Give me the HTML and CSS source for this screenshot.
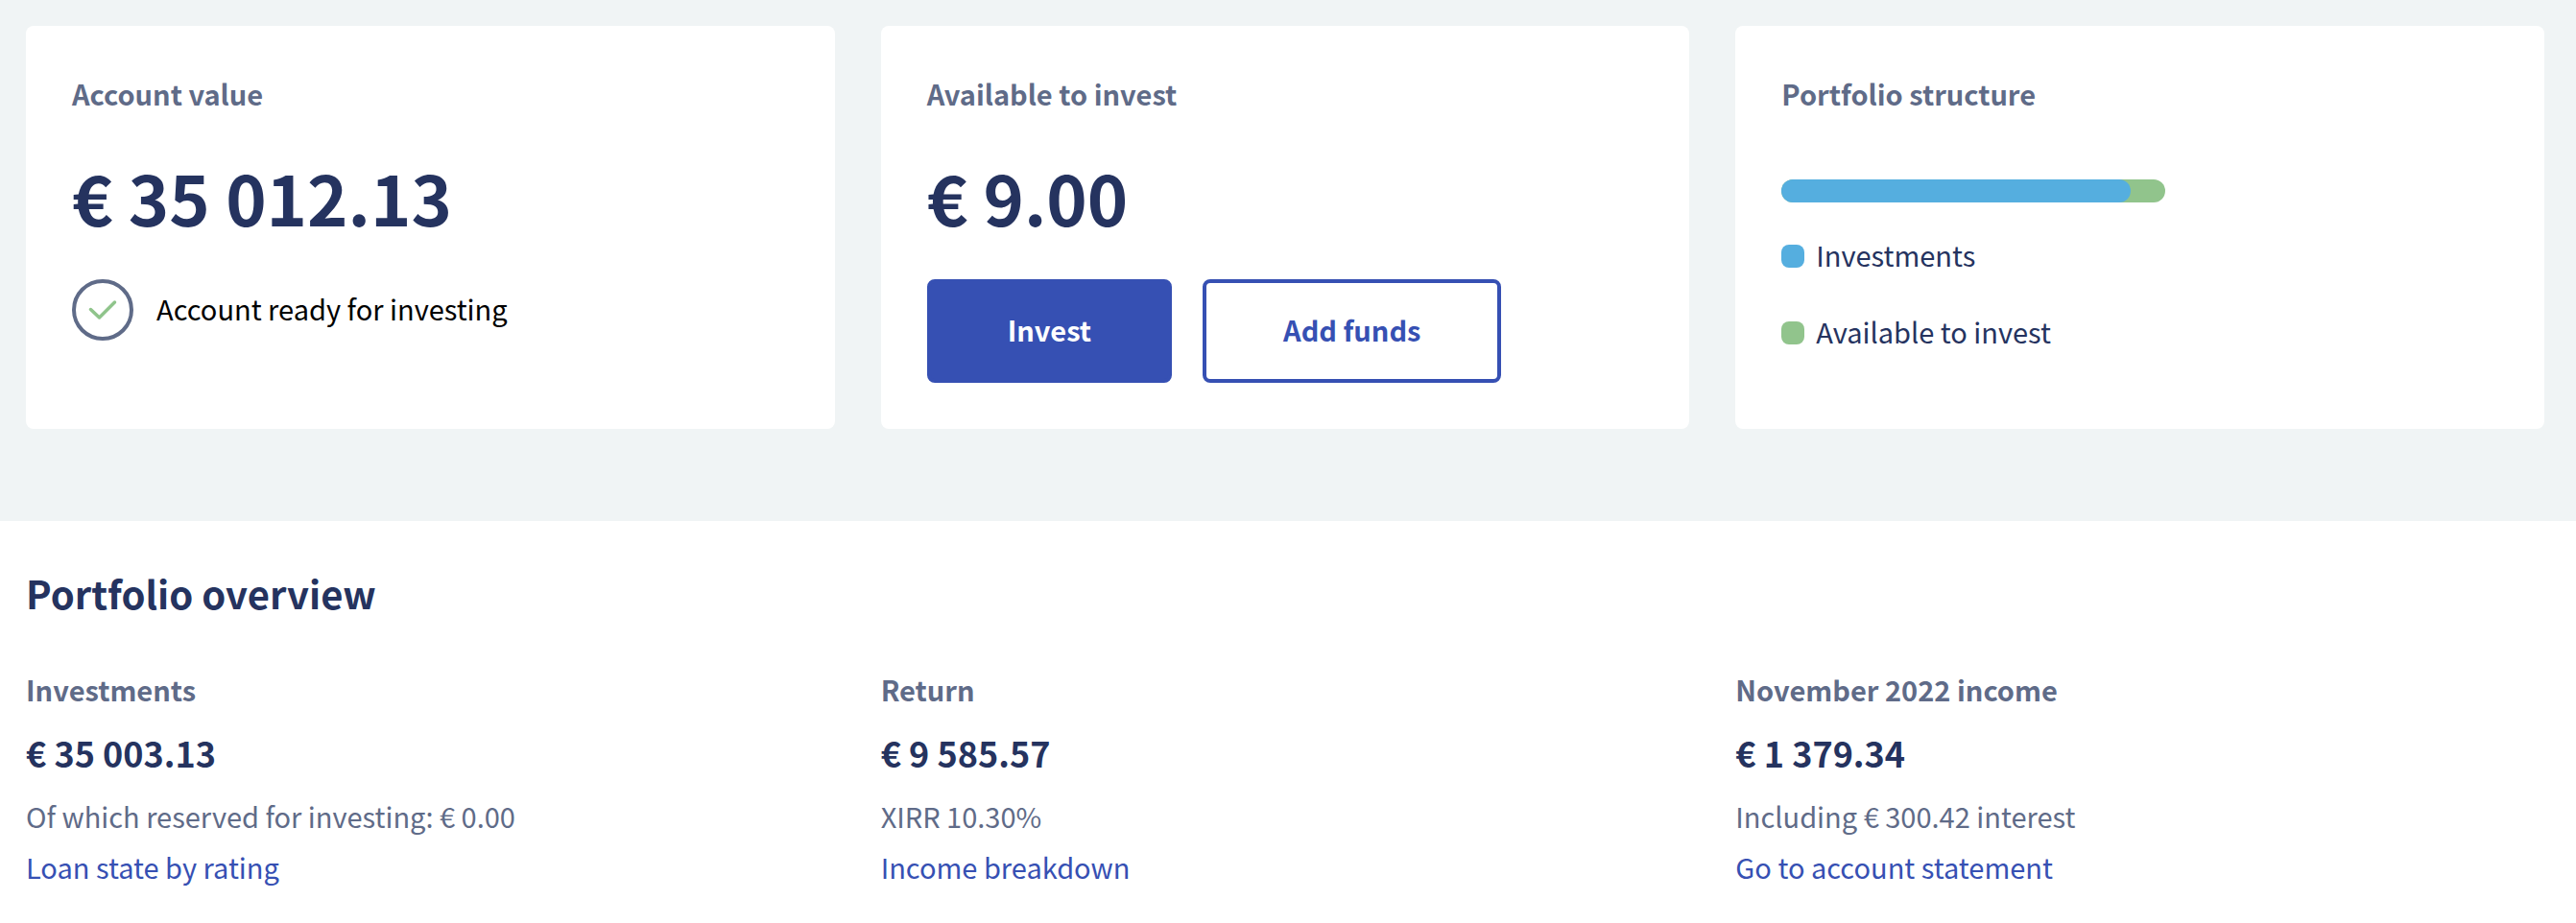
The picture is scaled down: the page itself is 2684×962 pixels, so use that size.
FILE: index.html
```
<!DOCTYPE html>
<html lang="en">
<head>
    <meta charset="UTF-8">
    <title>Portfolio</title>
    <link rel="stylesheet" href="styles.css">
</head>
<body>
<section class="summary">
    <div class="card">
        <h3 class="label">Account value</h3>
        <p class="amount">€ 35 012.13</p>
        <div class="status">
            <svg class="status-icon" viewBox="0 0 64 64" aria-hidden="true">
                <circle cx="32" cy="32" r="30" fill="none" stroke="#5f6b88" stroke-width="4"/>
                <path d="M19.5 31.5l9 8.5 16-16" fill="none" stroke="#8fc48b" stroke-width="3.5" stroke-linecap="round" stroke-linejoin="round"/>
            </svg>
            <span class="status-text">Account ready for investing</span>
        </div>
    </div>
    <div class="card">
        <h3 class="label">Available to invest</h3>
        <p class="amount">€ 9.00</p>
        <div class="actions">
            <button type="button" class="btn btn-primary">Invest</button>
            <button type="button" class="btn btn-outline">Add funds</button>
        </div>
    </div>
    <div class="card">
        <h3 class="label">Portfolio structure</h3>
        <div class="bar">
            <div class="bar-fill" style="width: 91%"></div>
        </div>
        <ul class="legend">
            <li><i class="dot dot-blue"></i><span class="legend-text">Investments</span></li>
            <li><i class="dot dot-green"></i><span class="legend-text">Available to invest</span></li>
        </ul>
    </div>
</section>

<section class="overview">
    <h2 class="title">Portfolio overview</h2>
    <div class="columns">
        <div class="column">
            <h3 class="label">Investments</h3>
            <p class="sum">€ 35 003.13</p>
            <p class="note">Of which reserved for investing: € 0.00</p>
            <a href="#" class="link">Loan state by rating</a>
        </div>
        <div class="column">
            <h3 class="label">Return</h3>
            <p class="sum">€ 9 585.57</p>
            <p class="note">XIRR 10.30%</p>
            <a href="#" class="link">Income breakdown</a>
        </div>
        <div class="column">
            <h3 class="label">November 2022 income</h3>
            <p class="sum">€ 1 379.34</p>
            <p class="note">Including € 300.42 interest</p>
            <a href="#" class="link">Go to account statement</a>
        </div>
    </div>
</section>
</body>
</html>
```
FILE: styles.css
```
* {
    margin: 0;
    padding: 0;
    box-sizing: border-box;
}

body {
    font-family: "Noto Sans CJK SC", "Open Sans", sans-serif;
    font-size: 29px;
    line-height: 44px;
    color: #25335f;
    background: #fff;
}

ul {
    list-style: none;
}

/* top cards */
.summary {
    display: grid;
    grid-template-columns: repeat(3, 1fr);
    gap: 48px;
    padding: 27px 33px 96px 27px;
    background: #f0f4f5;
}

.card {
    padding: 48px;
    border-radius: 8px;
    background: #fff;
}

.label {
    font-size: 29px;
    line-height: 44px;
    font-weight: bold;
    color: #5f6b88;
}

.amount {
    margin: 44px 0;
    font-size: 72px;
    line-height: 84px;
    font-weight: bold;
}

.status {
    display: flex;
    align-items: center;
    gap: 24px;
    color: #000;
}

.status-icon {
    width: 64px;
    height: 64px;
}

.status-text,
.legend-text {
    padding-bottom: 4px;
}

.actions {
    display: flex;
    gap: 32px;
}

.btn {
    height: 108px;
    padding: 0 80px 4px;
    border: 4px solid #3650b3;
    border-radius: 8px;
    font-family: inherit;
    font-size: 29px;
    font-weight: bold;
    cursor: pointer;
}

.btn-primary {
    color: #fff;
    background: #3650b3;
}

.btn-outline {
    color: #3650b3;
    background: #fff;
}

.bar {
    width: 400px;
    max-width: 100%;
    height: 24px;
    margin: 68px 0 32px;
    border-radius: 12px;
    background: #91c48c;
}

.bar-fill {
    height: 24px;
    border-radius: 12px;
    background: #55aedf;
}

.legend li {
    display: flex;
    align-items: center;
    gap: 12px;
}

.legend li + li {
    margin-top: 32px;
}

.dot {
    width: 24px;
    height: 24px;
    border-radius: 8px;
}

.dot-blue {
    background: #55aedf;
}

.dot-green {
    background: #91c48c;
}

/* overview */
.overview {
    padding: 48px 33px 32px 27px;
}

.title {
    font-size: 40px;
    line-height: 54px;
    font-weight: bold;
}

.columns {
    display: grid;
    grid-template-columns: repeat(3, 1fr);
    gap: 48px;
    margin-top: 51px;
}

.sum {
    margin: 20px 0 16px;
    font-size: 36px;
    line-height: 48px;
    font-weight: bold;
}

.note,
.link {
    display: block;
    line-height: 53px;
}

.note {
    color: #5f6b88;
}

.link {
    color: #3650b3;
    text-decoration: none;
}
```
